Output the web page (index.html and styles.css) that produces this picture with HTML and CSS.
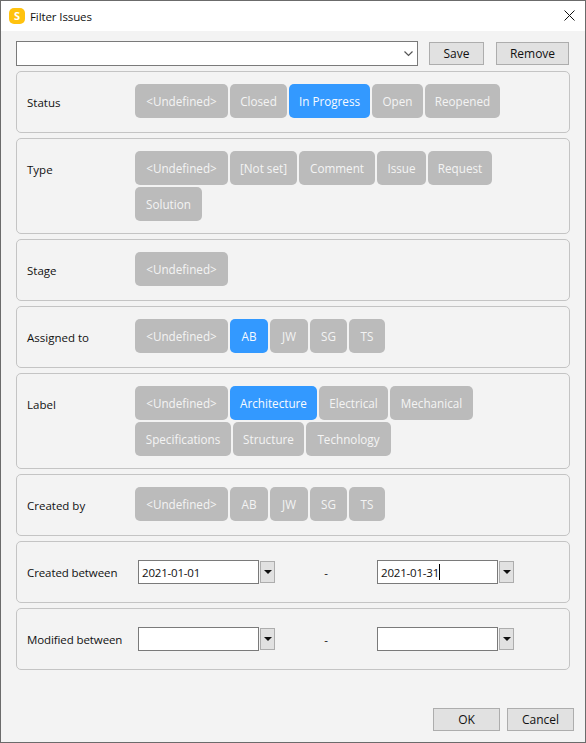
FILE: index.html
```html
<!DOCTYPE html>
<html lang="en">
<head>
    <meta charset="UTF-8">
    <meta name="viewport" content="width=device-width, initial-scale=1.0">
    <title>Filter Issues</title>
    <link rel="stylesheet" href="styles.css">
</head>
<body>
    <div class="window">
        <div class="titlebar">
            <span class="app-icon">S</span>
            <span class="title">Filter Issues</span>
            <svg class="close-icon" width="11" height="11" viewBox="0 0 11 11"><path d="M0.5 0.5L10.5 10.5M10.5 0.5L0.5 10.5" stroke="#111" stroke-width="1" fill="none"/></svg>
        </div>

        <div class="content">
            <!-- Saved filters -->
            <div class="preset-row">
                <div class="combo">
                    <svg width="9" height="6" viewBox="0 0 9 6"><path d="M0.5 0.5L4.5 4.5L8.5 0.5" stroke="#555" stroke-width="1.2" fill="none"/></svg>
                </div>
                <button class="btn save-btn">Save</button>
                <button class="btn remove-btn">Remove</button>
            </div>

            <div class="group">
                <div class="group-label">Status</div>
                <div class="chips">
                    <span class="chip w-93">&lt;Undefined&gt;</span>
                    <span class="chip w-57">Closed</span>
                    <span class="chip w-81 active">In Progress</span>
                    <span class="chip w-51">Open</span>
                    <span class="chip w-75">Reopened</span>
                </div>
            </div>

            <div class="group">
                <div class="group-label">Type</div>
                <div class="chips">
                    <span class="chip w-93">&lt;Undefined&gt;</span>
                    <span class="chip w-67">[Not set]</span>
                    <span class="chip w-76">Comment</span>
                    <span class="chip w-49">Issue</span>
                    <span class="chip w-64">Request</span>
                    <span class="chip w-67">Solution</span>
                </div>
            </div>

            <div class="group">
                <div class="group-label">Stage</div>
                <div class="chips">
                    <span class="chip w-93">&lt;Undefined&gt;</span>
                </div>
            </div>

            <div class="group">
                <div class="group-label">Assigned to</div>
                <div class="chips">
                    <span class="chip w-93">&lt;Undefined&gt;</span>
                    <span class="chip w-38 active">AB</span>
                    <span class="chip w-38">JW</span>
                    <span class="chip w-37">SG</span>
                    <span class="chip w-36">TS</span>
                </div>
            </div>

            <div class="group">
                <div class="group-label">Label</div>
                <div class="chips">
                    <span class="chip w-93">&lt;Undefined&gt;</span>
                    <span class="chip w-87 active">Architecture</span>
                    <span class="chip w-69">Electrical</span>
                    <span class="chip w-83">Mechanical</span>
                    <span class="chip w-96">Specifications</span>
                    <span class="chip w-71">Structure</span>
                    <span class="chip w-85">Technology</span>
                </div>
            </div>

            <div class="group">
                <div class="group-label">Created by</div>
                <div class="chips">
                    <span class="chip w-93">&lt;Undefined&gt;</span>
                    <span class="chip w-38">AB</span>
                    <span class="chip w-38">JW</span>
                    <span class="chip w-37">SG</span>
                    <span class="chip w-36">TS</span>
                </div>
            </div>

            <div class="group date-group">
                <div class="date-label">Created between</div>
                <div class="date-field">
                    <div class="date-input">2021-01-01</div>
                    <div class="date-btn"><span class="arrow"></span></div>
                </div>
                <div class="dash">-</div>
                <div class="date-field">
                    <div class="date-input">2021-01-31<span class="caret"></span></div>
                    <div class="date-btn"><span class="arrow"></span></div>
                </div>
            </div>

            <div class="group date-group">
                <div class="date-label">Modified between</div>
                <div class="date-field">
                    <div class="date-input"></div>
                    <div class="date-btn"><span class="arrow"></span></div>
                </div>
                <div class="dash">-</div>
                <div class="date-field">
                    <div class="date-input"></div>
                    <div class="date-btn"><span class="arrow"></span></div>
                </div>
            </div>

            <div class="footer">
                <button class="btn footer-btn">OK</button>
                <button class="btn footer-btn">Cancel</button>
            </div>
        </div>
    </div>
</body>
</html>
```

FILE: styles.css
```css
* {
    box-sizing: border-box;
}

body {
    margin: 0;
    font-family: "Open Sans", "Noto Sans", sans-serif;
    font-size: 11.5px;
    color: #111;
}

.window {
    display: flex;
    flex-direction: column;
    width: 586px;
    height: 743px;
    border: 1px solid #6b6b6b;
    background: #f3f3f3;
}

.titlebar {
    display: flex;
    align-items: center;
    height: 30px;
    padding: 0 10px 0 8px;
    background: #fff;
}

.app-icon {
    width: 16px;
    height: 16px;
    margin-right: 5px;
    margin-bottom: 1px;
    border-radius: 5px;
    background: #ffc20e;
    color: #fff;
    font-size: 11px;
    font-weight: 700;
    line-height: 16px;
    text-align: center;
}

.title {
    flex: 1;
    letter-spacing: -0.1px;
}

.close-icon {
    margin-bottom: 2px;
}

.content {
    display: flex;
    flex: 1;
    flex-direction: column;
    gap: 5px;
    padding: 10px 15px 11px;
}

.preset-row {
    display: flex;
    align-items: center;
    height: 25px;
}

.combo {
    display: flex;
    align-items: center;
    justify-content: flex-end;
    width: 402px;
    height: 25px;
    padding-right: 4px;
    border: 1px solid #7a7a7a;
    background: #fff;
}

.btn {
    height: 23px;
    padding: 0;
    border: 1px solid #adadad;
    background: #e1e1e1;
    color: #111;
    font-family: inherit;
    font-size: 12px;
}

.save-btn {
    width: 55px;
    margin-left: 11px;
}

.remove-btn {
    width: 73px;
    margin-left: 12px;
}

.group {
    display: flex;
    flex-shrink: 0;
    width: 554px;
    min-height: 62px;
    padding: 12px 10px;
    border: 1px solid #c4c4c4;
    border-radius: 5px;
}

.group-label {
    width: 108px;
    flex-shrink: 0;
    padding-top: 4px;
    line-height: 30px;
}

.chips {
    display: flex;
    flex-wrap: wrap;
    align-content: flex-start;
    gap: 2px;
    width: 400px;
}

.chip {
    height: 34px;
    border-radius: 5px;
    background: #bbbbbb;
    color: #f4f4f4;
    font-size: 11.7px;
    line-height: 34px;
    text-align: center;
    white-space: nowrap;
}

.chip.active {
    background: #3399ff;
    color: #f8fbff;
}

/* chip widths */
.w-36 { width: 36px; }
.w-37 { width: 37px; }
.w-38 { width: 38px; }
.w-49 { width: 49px; }
.w-51 { width: 51px; }
.w-57 { width: 57px; }
.w-64 { width: 64px; }
.w-67 { width: 67px; }
.w-69 { width: 69px; }
.w-71 { width: 71px; }
.w-75 { width: 75px; }
.w-76 { width: 76px; }
.w-81 { width: 81px; }
.w-83 { width: 83px; }
.w-85 { width: 85px; }
.w-87 { width: 87px; }
.w-93 { width: 93px; }
.w-96 { width: 96px; }

.date-group {
    align-items: center;
    height: 62px;
    padding: 0 10px;
}

.date-label {
    width: 111px;
    flex-shrink: 0;
    letter-spacing: -0.1px;
}

.date-field {
    display: flex;
    align-items: center;
    gap: 1px;
}

.date-input {
    display: flex;
    align-items: center;
    width: 121px;
    height: 24px;
    padding-left: 3px;
    border: 1px solid #7a7a7a;
    background: #fff;
    letter-spacing: -0.2px;
}

.caret {
    width: 1px;
    height: 16px;
    background: #000;
}

.date-btn {
    display: flex;
    align-items: center;
    justify-content: center;
    width: 15px;
    height: 22px;
    border: 1px solid #adadad;
    background: #e1e1e1;
}

.arrow {
    border-top: 4px solid #111;
    border-left: 4px solid transparent;
    border-right: 4px solid transparent;
}

.dash {
    width: 102px;
    text-align: center;
}

.footer {
    display: flex;
    justify-content: flex-end;
    gap: 7px;
    margin-top: auto;
    margin-right: -4px;
}

.footer-btn {
    width: 67px;
}
```
